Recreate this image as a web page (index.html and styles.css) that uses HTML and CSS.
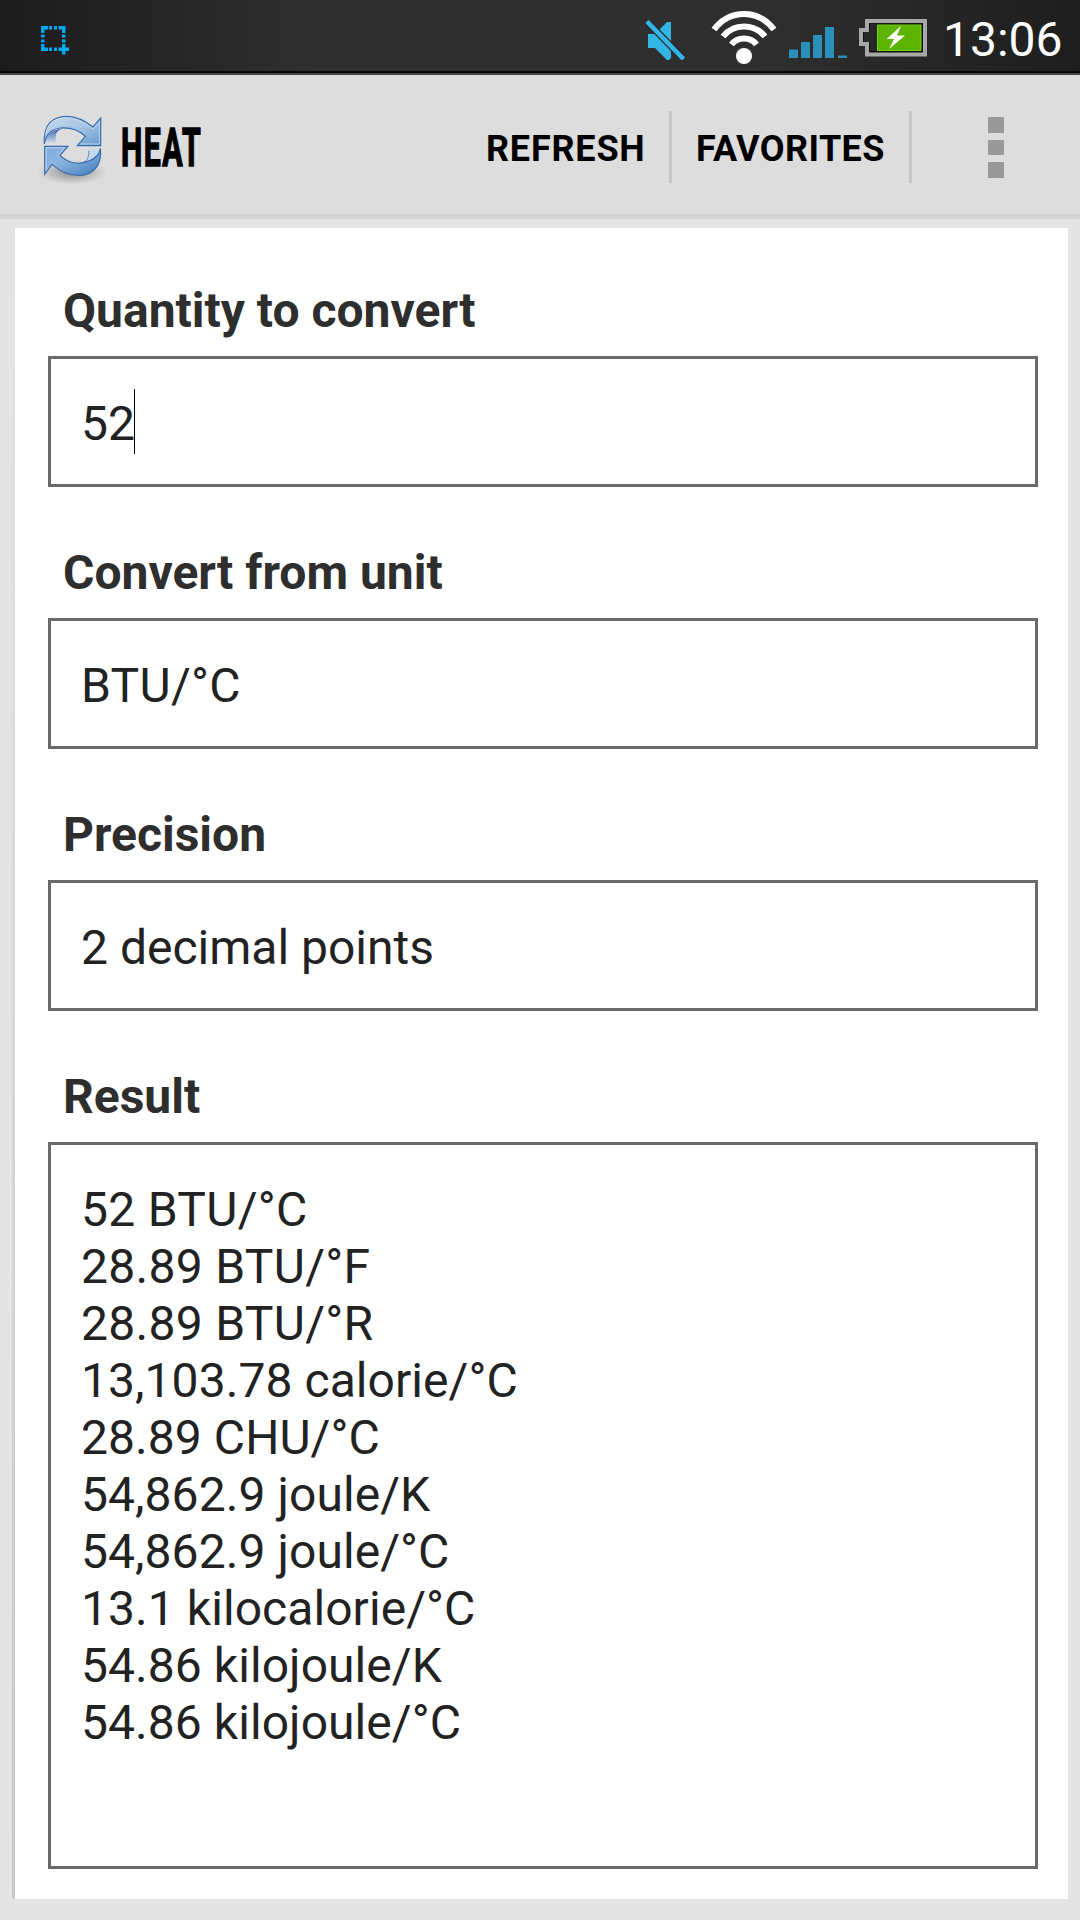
FILE: index.html
```
<!DOCTYPE html>
<html lang="en">
<head>
<meta charset="utf-8">
<title>Heat</title>
<meta name="viewport" content="width=device-width, initial-scale=1.0">
<link rel="stylesheet" href="styles.css">
</head>
<body>
    <div class="statusbar">
        <svg class="icon-capture" width="30" height="30" viewBox="0 0 30 30" fill="#00a8f0">
            <path d="M1 1h7v3.500H4.500V8H1zM9 1h3v3.500H9zM14 1h3v3.500h-3zM18.500 1H25.500V8H22V4.500h-3.500zM1 9.500h3.500v3H1zM1 14.500h3.500v3H1zM1 19h3.500v3.500H8V26H1zM9 22.500h3V26H9zM14 22.500h3V26h-3zM22 9.500h3.500v3H22zM22 14.500h3.500v3H22zM22 19h3.500v3.500H29V26h-3.500v3.500H22V26h-3.500v-3.500H22z"/>
        </svg>
        <div class="status-right">
            <svg class="icon-mute" width="40" height="40" viewBox="0 0 40 40">
                <path d="M2 14h7L21 2h4v36l-2 2h-2L9 28H2z" fill="#33b5e5"/>
                <path d="M2.500 3L36 37.500" stroke="#2b2b2b" stroke-width="7" stroke-linecap="square"/>
                <path d="M2.500 3L36 37.500" stroke="#33b5e5" stroke-width="4.500" stroke-linecap="square"/>
            </svg>
            <svg class="icon-wifi" width="66" height="56" viewBox="0 0 66 56" fill="none" stroke="#fff" stroke-width="6">
                <path d="M3 19.500Q15 4 33 4T63 19.500"/>
                <path d="M12 26.500Q20 16.500 33 16.500T54 26.500"/>
                <path d="M20.500 34.500Q25 28.500 33 28.500T45.500 34.500"/>
                <circle cx="33" cy="46" r="8" fill="#fff" stroke="none"/>
            </svg>
            <svg class="icon-signal" width="58" height="32" viewBox="0 0 58 32" fill="#2a90b9">
                <path d="M0 22.500h9V31H0zM12 15h9v16h-9zM24 8h9v23h-9zM36 0h9v31h-9zM49 28.500h9V31h-9z"/>
            </svg>
            <svg class="icon-battery" width="68" height="39" viewBox="0 0 68 39">
                <path d="M8 3H66V36.500H8V26H2V12H8z" fill="#111" stroke="#a8a8a8" stroke-width="4"/>
                <path d="M11 6h8v27h-8v-9H5V14h6z" fill="#282828"/>
                <path d="M18.500 7H62V32.500H18.500z" fill="#5cb400" stroke="#72d600"/>
                <path d="M42 8L27.500 21h7.500L30 31 46 17.500h-8z" fill="#fff"/>
            </svg>
            <span class="clock">13:06</span>
        </div>
    </div>

    <div class="actionbar">
        <svg class="logo" width="72" height="70" viewBox="105 342 216 210">
            <defs>
                <linearGradient id="up" x1="0" y1="0" x2="1" y2="1">
                    <stop offset="0" stop-color="#c6daee"/>
                    <stop offset=".5" stop-color="#a6c5e6"/>
                    <stop offset="1" stop-color="#6699cd"/>
                </linearGradient>
                <linearGradient id="down" x1="0" y1="0" x2="1" y2="1">
                    <stop offset="0" stop-color="#82ade0"/>
                    <stop offset=".4" stop-color="#8db4de"/>
                    <stop offset="1" stop-color="#3f7dbf"/>
                </linearGradient>
                <linearGradient id="tail" x1="0" y1="0" x2="0" y2="1">
                    <stop offset="0" stop-color="#2f65ad"/>
                    <stop offset="1" stop-color="#d5e0ec"/>
                </linearGradient>
                <radialGradient id="shade">
                    <stop offset="0" stop-color="#777" stop-opacity=".9"/>
                    <stop offset="1" stop-color="#999" stop-opacity="0"/>
                </radialGradient>
            </defs>
            <ellipse cx="216" cy="516" rx="106" ry="38" fill="url(#shade)"/>
            <path d="M134 430C139 402 158 386 202 385C170 386 165 400 168 426z" fill="url(#tail)"/>
            <path d="M266 450C267 475 260 486 236 491C275 492 295 475 300 445z" fill="#c5d8eb"/>
            <path d="M266 452C268 472 261 487 238 491" fill="none" stroke="#5b91d0" stroke-width="3"/>
            <g stroke="#376bac" stroke-width="3.500">
                <path d="M133 432C128 372 160 349 200 349C235 350 260 366 279 381L302 354V437H232L256 409C238 391 209 382 181 384C156 387 138 400 133 432z" fill="url(#up)"/>
                <path d="M134 439H204L180 466C200 485 226 493 250 488C280 481 298 467 301 445C308 498 276 527 236 526C203 526 176 511 156 493L134 523z" fill="url(#down)"/>
            </g>
            <path d="M138 398C145 365 172 353 200 353C232 354 258 370 279 387L298 367V432H242M138 512V443H194L174 466" fill="none" stroke="#d5e5f5" stroke-opacity=".7" stroke-width="3"/>
        </svg>
        <h1 class="title"><span>HEAT</span></h1>
        <a class="action refresh">REFRESH</a>
        <a class="action favorites">FAVORITES</a>
        <div class="overflow">
            <i></i>
            <i></i>
            <i></i>
        </div>
    </div>

    <div class="card">
        <h3>Quantity to convert</h3>
        <div class="field">52<span class="caret"></span></div>
        <h3>Convert from unit</h3>
        <div class="field btu">BTU/°C</div>
        <h3>Precision</h3>
        <div class="field">2 decimal points</div>
        <h3>Result</h3>
        <div class="field result">
            <div class="btu">52 BTU/°C</div>
            <div class="btu">28.89 BTU/°F</div>
            <div class="btu">28.89 BTU/°R</div>
            <div>13,103.78 calorie/°C</div>
            <div>28.89 CHU/°C</div>
            <div>54,862.9 joule/K</div>
            <div>54,862.9 joule/°C</div>
            <div>13.1 kilocalorie/°C</div>
            <div>54.86 kilojoule/K</div>
            <div>54.86 kilojoule/°C</div>
        </div>
    </div>
</body>
</html>
```
FILE: styles.css
```
* { box-sizing: border-box; }
body {
    margin: 0;
    height: 1920px;
    overflow: hidden;
    background: #e4e4e4;
    font-family: Roboto, "Liberation Sans", sans-serif;
    color: #222;
}
svg { display: block; flex: none; }

/* status bar */
.statusbar {
    display: flex;
    justify-content: space-between;
    align-items: flex-start;
    height: 75px;
    padding: 0 17px 0 40px;
    background: linear-gradient(90deg, #1c1c1c, #2f2f2f 30%, #2f2f2f 70%, #1e1e1e);
    border-bottom: 2px solid #444;
    box-shadow: inset 0 -2px 0 #080808;
}
.icon-capture { margin-top: 25px; }
.status-right { display: flex; align-items: flex-start; }
.icon-mute { margin: 20px 25px 0 0; }
.icon-wifi { margin: 10px 12px 0 0; }
.icon-signal { margin: 27px 12px 0 0; }
.icon-battery { margin: 18px 16px 0 0; }
.clock {
    width: 120px;
    margin-top: 11px;
    font-size: 48px;
    line-height: 57px;
    color: #fff;
    white-space: nowrap;
}

/* action bar */
.actionbar {
    display: flex;
    height: 144px;
    padding-left: 35px;
    background: #ddd;
    border-bottom: 5px solid #d2d2d2;
}
.logo { margin-top: 39px; }
.title {
    width: 360px;
    margin: 42px 0 0 14px;
    font-size: 53px;
    line-height: 62px;
    font-weight: bold;
    color: #000;
}
.title span {
    display: inline-block;
    transform: scaleX(.57);
    transform-origin: left;
    letter-spacing: 2.5px;
    -webkit-text-stroke: 1.5px #000;
}
.action {
    height: 72px;
    margin-top: 36px;
    border-right: 3px solid #c6c6c6;
    font-size: 36px;
    line-height: 76px;
    font-weight: bold;
    letter-spacing: .8px;
    color: #000;
    white-space: nowrap;
}
.refresh { width: 191px; padding-left: 5px; }
.favorites { width: 240px; padding-left: 24px; letter-spacing: .4px; }
.overflow {
    display: flex;
    flex-direction: column;
    gap: 7px;
    margin: 42px 0 0 76px;
}
.overflow i { width: 16px; height: 15.5px; background: #999; }

/* form */
.card {
    position: relative;
    height: 1671px;
    margin: 9px 12px 0 15px;
    padding: 54px 30px 0 33px;
    background: #fff;
}
.card:before {
    content: "";
    position: absolute;
    top: 0;
    bottom: 0;
    left: -3px;
    width: 3px;
    background: linear-gradient(#e4e4e4, #c8c8c8);
}
h3 {
    margin: 0 0 17px;
    padding-left: 15px;
    font-size: 48px;
    line-height: 57px;
    color: #2e2e2e;
}
.field {
    height: 131px;
    margin-bottom: 57px;
    padding: 36px 0 0 30px;
    border: 3px solid #6a6a6a;
    font-size: 48px;
    line-height: 57px;
    white-space: nowrap;
}
.result {
    height: 727px;
    margin-bottom: 0;
    letter-spacing: .06px;
}
.btu { letter-spacing: .3px; }
.caret {
    display: inline-block;
    width: 1px;
    height: 65px;
    margin: -4px 0 -4px -1px;
    vertical-align: -10px;
    background: #000;
}
/* keeps the tall caret from pushing the baseline down */
.field .caret { margin-top: -20px; margin-bottom: -4px; }
```
